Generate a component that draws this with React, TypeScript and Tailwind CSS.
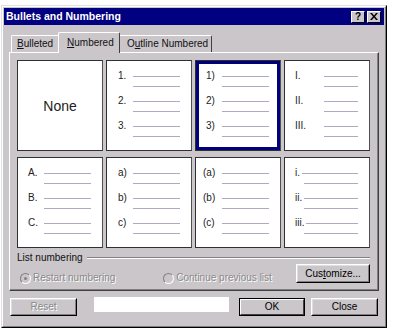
import React from "react";

const LINE = "h-[1px] bg-[#b3a8c1]";

type CellProps = {
  labels: string[];
  padCls: string;
  labelCls: string;
  subCls: string;
  selected?: boolean;
};

function Cell({ labels, padCls, labelCls, subCls, selected }: CellProps) {
  return (
    <div className="w-[86px] h-[91px] bg-white border border-t-[#303030] border-l-[#303030] border-r-[#505050] border-b-[#303030]">
      <div
        className={`h-full flex flex-col pt-[9px] pr-[11px] ${padCls} ${
          selected ? "shadow-[inset_0_0_0_3px_#00007c]" : ""
        }`}
      >
        {labels.map((l) => (
          <div key={l} className="h-[25px]">
            <div className="flex items-center h-[12px]">
              <span className={`text-[10px] leading-[12px] text-[#222] whitespace-nowrap ${labelCls}`}>{l}</span>
              <div className={`flex-1 ${LINE}`} />
            </div>
            <div className={`mt-[4px] ${LINE} ${subCls}`} />
          </div>
        ))}
      </div>
    </div>
  );
}

function Btn({
  children,
  cls,
  def,
  disabled,
}: {
  children: React.ReactNode;
  cls: string;
  def?: boolean;
  disabled?: boolean;
}) {
  return (
    <div
      className={`${cls} flex border ${
        def ? "border-black" : "border-t-white border-l-white border-r-black border-b-black"
      }`}
    >
      <div
        className={`flex-1 flex items-center justify-center border ${
          def
            ? "border-t-white border-l-white border-r-[#404040] border-b-[#404040]"
            : "border-t-[#dfdfdf] border-l-[#dfdfdf] border-r-[#808080] border-b-[#808080]"
        } text-[10px] leading-[12px] ${disabled ? "text-[#8a8a8a] [text-shadow:1px_1px_0_#fff]" : "text-black"}`}
      >
        {children}
      </div>
    </div>
  );
}

function Radio({ checked }: { checked?: boolean }) {
  return (
    <span className="w-[11px] h-[11px] rounded-full border border-t-[#808080] border-l-[#808080] border-r-white border-b-white flex items-center justify-center shrink-0">
      {checked ? <span className="w-[3px] h-[3px] rounded-full bg-[#808080]" /> : null}
    </span>
  );
}

export default function App() {
  return (
    <div className="w-[396px] h-[335px] bg-white font-['Liberation_Sans',Arial,sans-serif] text-black pt-[5px] pl-[1px]">
      <div className="w-[386px] h-[323px] border border-t-[#dfdfdf] border-l-[#dfdfdf] border-r-black border-b-black bg-[#cac6c9]">
        <div className="h-full border border-t-white border-l-white border-r-[#808080] border-b-[#808080] p-[1px] flex flex-col">
          {/* Title bar */}
          <div className="h-[17px] bg-[#000080] flex items-center pl-[2px] pr-[3px]">
            <span className="text-white font-bold text-[10.5px] leading-[13px]">Bullets and Numbering</span>
            <div className="ml-auto flex gap-[2px]">
              <div className="w-[14px] h-[12px] bg-[#cac6c9] border border-t-white border-l-white border-r-black border-b-black flex items-center justify-center text-[10px] font-bold leading-[10px]">
                ?
              </div>
              <div className="w-[14px] h-[12px] bg-[#cac6c9] border border-t-white border-l-white border-r-black border-b-black flex items-center justify-center">
                <svg width="8" height="7" viewBox="0 0 8 7">
                  <path d="M0 0h2l2 2.5L6 0h2L5 3.5 8 7H6L4 4.5 2 7H0l3-3.5z" fill="#000" />
                </svg>
              </div>
            </div>
          </div>

          {/* Tabs */}
          <div className="mt-[7px] ml-[5px] mr-[5px] flex flex-col">
            <div className="h-[20px] flex items-end pl-[2px]">
              <div className="w-[47px] h-[17px] border-t border-l border-t-white border-l-white rounded-tl-[2px] flex items-center pl-[5px] text-[10px] leading-[12px] text-[#111]">
                <span>
                  <span className="underline">B</span>ulleted
                </span>
              </div>
              <div className="relative z-10 -mb-[1px] w-[62px] h-[21px] bg-[#cac6c9] border-t border-l border-r border-t-white border-l-white border-r-[#404040] rounded-t-[2px] flex items-start pt-[4px] pl-[8px] text-[10px] leading-[12px] text-[#111]">
                <span>
                  <span className="underline">N</span>umbered
                </span>
              </div>
              <div className="w-[92px] h-[17px] border-t border-r border-t-white border-r-[#404040] rounded-tr-[2px] flex items-center pl-[7px] text-[10px] leading-[12px] text-[#111]">
                <span>
                  O<span className="underline">u</span>tline Numbered
                </span>
              </div>
            </div>

            {/* Panel */}
            <div className="h-[239px] border border-t-white border-l-white border-r-[#404040] border-b-[#404040] shadow-[inset_-1px_-1px_0_#808080] pt-[7px] pl-[7px] pr-[8px] flex flex-col">
              <div className="grid grid-cols-[86px_86px_86px_86px] gap-x-[3px] gap-y-[6px]">
                <div className="w-[86px] h-[91px] bg-white border border-t-[#303030] border-l-[#303030] border-r-[#505050] border-b-[#303030] flex items-center justify-center">
                  <span className="text-[14px] leading-[16px] text-[#222]">None</span>
                </div>
                <Cell labels={["1.", "2.", "3."]} padCls="pl-[11px]" labelCls="w-[15px]" subCls="ml-[15px]" />
                <Cell labels={["1)", "2)", "3)"]} padCls="pl-[10px]" labelCls="w-[16px]" subCls="ml-[16px]" selected />
                <Cell labels={["I.", "II.", "III."]} padCls="pl-[10px]" labelCls="w-[29px]" subCls="ml-[29px]" />
                <Cell labels={["A.", "B.", "C."]} padCls="pl-[10px]" labelCls="w-[16px]" subCls="ml-[16px]" />
                <Cell labels={["a)", "b)", "c)"]} padCls="pl-[11px]" labelCls="w-[15px]" subCls="ml-[15px]" />
                <Cell labels={["(a)", "(b)", "(c)"]} padCls="pl-[7px]" labelCls="w-[19px]" subCls="ml-[19px]" />
                <Cell labels={["i.", "ii.", "iii."]} padCls="pl-[10px]" labelCls="mr-[2px]" subCls="ml-[9px]" />
              </div>

              {/* List numbering */}
              <div className="mt-[5px] h-[10px] flex items-center">
                <span className="text-[10px] leading-[10px] text-[#111]">List numbering</span>
                <div className="flex-1 ml-[4px] border-t border-b border-t-[#808080] border-b-white" />
              </div>
              <div className="h-[20px] flex items-end">
                <div className="flex items-center ml-[3px] mb-[-1px] text-[10px] leading-[12px] text-[#8a8a8a] [text-shadow:1px_1px_0_#fff]">
                  <Radio checked />
                  <span className="ml-[2px]">Restart numbering</span>
                </div>
                <div className="flex items-center ml-[48px] mb-[-1px] text-[10px] leading-[12px] text-[#8a8a8a] [text-shadow:1px_1px_0_#fff]">
                  <Radio />
                  <span className="ml-[2px]">Continue previous list</span>
                </div>
                <div className="ml-auto">
                  <Btn cls="w-[74px] h-[19px]">
                    <span>
                      Cus<span className="underline">t</span>omize...
                    </span>
                  </Btn>
                </div>
              </div>
            </div>
          </div>

          {/* Bottom buttons */}
          <div className="mt-[7px] ml-[6px] flex items-start">
            <Btn cls="w-[67px] h-[18px]" disabled>
              Reset
            </Btn>
            <div className="ml-[17px] -mt-[1px] w-[135px] h-[15px] bg-white" />
            <div className="ml-[10px]">
              <Btn cls="w-[66px] h-[18px]" def>
                OK
              </Btn>
            </div>
            <div className="ml-[6px]">
              <Btn cls="w-[67px] h-[18px]">Close</Btn>
            </div>
          </div>
        </div>
      </div>
    </div>
  );
}
